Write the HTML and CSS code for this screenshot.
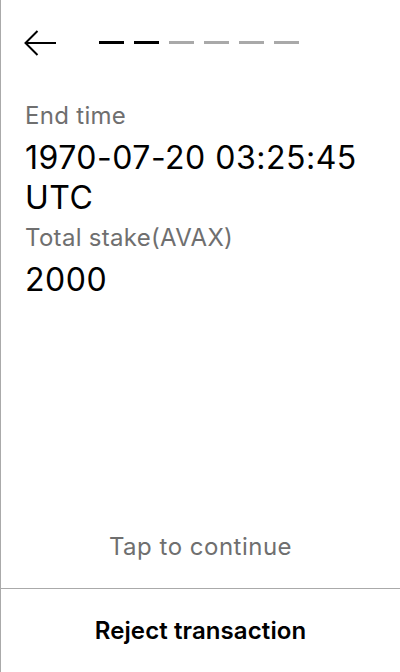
FILE: index.html
```html
<!DOCTYPE html>
<html lang="en">
<head>
<meta charset="utf-8">
<title>Review transaction</title>
<link rel="stylesheet" href="styles.css">
</head>
<body>
<div class="screen">
  <header class="top">
    <svg class="back" width="32" height="28" viewBox="0 0 32 28" aria-label="Back">
      <path d="M32 13H1.5M13.5 1 1.5 13 13.5 25" fill="none" stroke="#000" stroke-width="2"/>
    </svg>
    <div class="progress">
      <span class="dash on"></span>
      <span class="dash on"></span>
      <span class="dash"></span>
      <span class="dash"></span>
      <span class="dash"></span>
      <span class="dash"></span>
    </div>
  </header>
  <main class="content">
    <div class="pair">
      <div class="label">End time</div>
      <div class="value">1970-07-20 03:25:45 UTC</div>
    </div>
    <div class="pair">
      <div class="label">Total stake(AVAX)</div>
      <div class="value">2000</div>
    </div>
  </main>
  <div class="tap">Tap to continue</div>
  <footer class="reject">Reject transaction</footer>
</div>
</body>
</html>
```
FILE: styles.css
```css
* { box-sizing: border-box; }
html, body { margin: 0; padding: 0; background: #fff; }
body { font-family: Inter, "Noto Sans", sans-serif; color: #000; }

.screen {
  width: 400px;
  height: 672px;
  border-left: 1px solid #aaaaaa;
  display: flex;
  flex-direction: column;
}

.top {
  display: flex;
  align-items: flex-start;
  padding: 30px 0 0 23px;
  height: 100px;
}
.back { display: block; flex: none; }
.progress {
  display: flex;
  gap: 10px;
  margin: 11px 0 0 43px;
}
.dash {
  width: 25px;
  height: 3px;
  background: #a9a9a9;
}
.dash.on { background: #000; }

.content {
  flex: 1;
  padding: 0 16px 0 24px;
}
.pair + .pair { margin-top: 4px; }
.label {
  font-size: 24px;
  line-height: 32px;
  letter-spacing: 0.3px;
  color: #6f6f6f;
}
.value {
  font-size: 32px;
  line-height: 40px;
  font-weight: 400;
  letter-spacing: 0.5px;
  margin-top: 6px;
}

.tap {
  text-align: center;
  font-size: 24px;
  line-height: 32px;
  letter-spacing: 0.5px;
  color: #6f6f6f;
  margin-bottom: 25px;
}
.reject {
  border-top: 1px solid #aaaaaa;
  height: 84px;
  display: flex;
  align-items: center;
  justify-content: center;
  font-size: 24px;
  font-weight: 600;
  letter-spacing: 0.1px;
}
```
